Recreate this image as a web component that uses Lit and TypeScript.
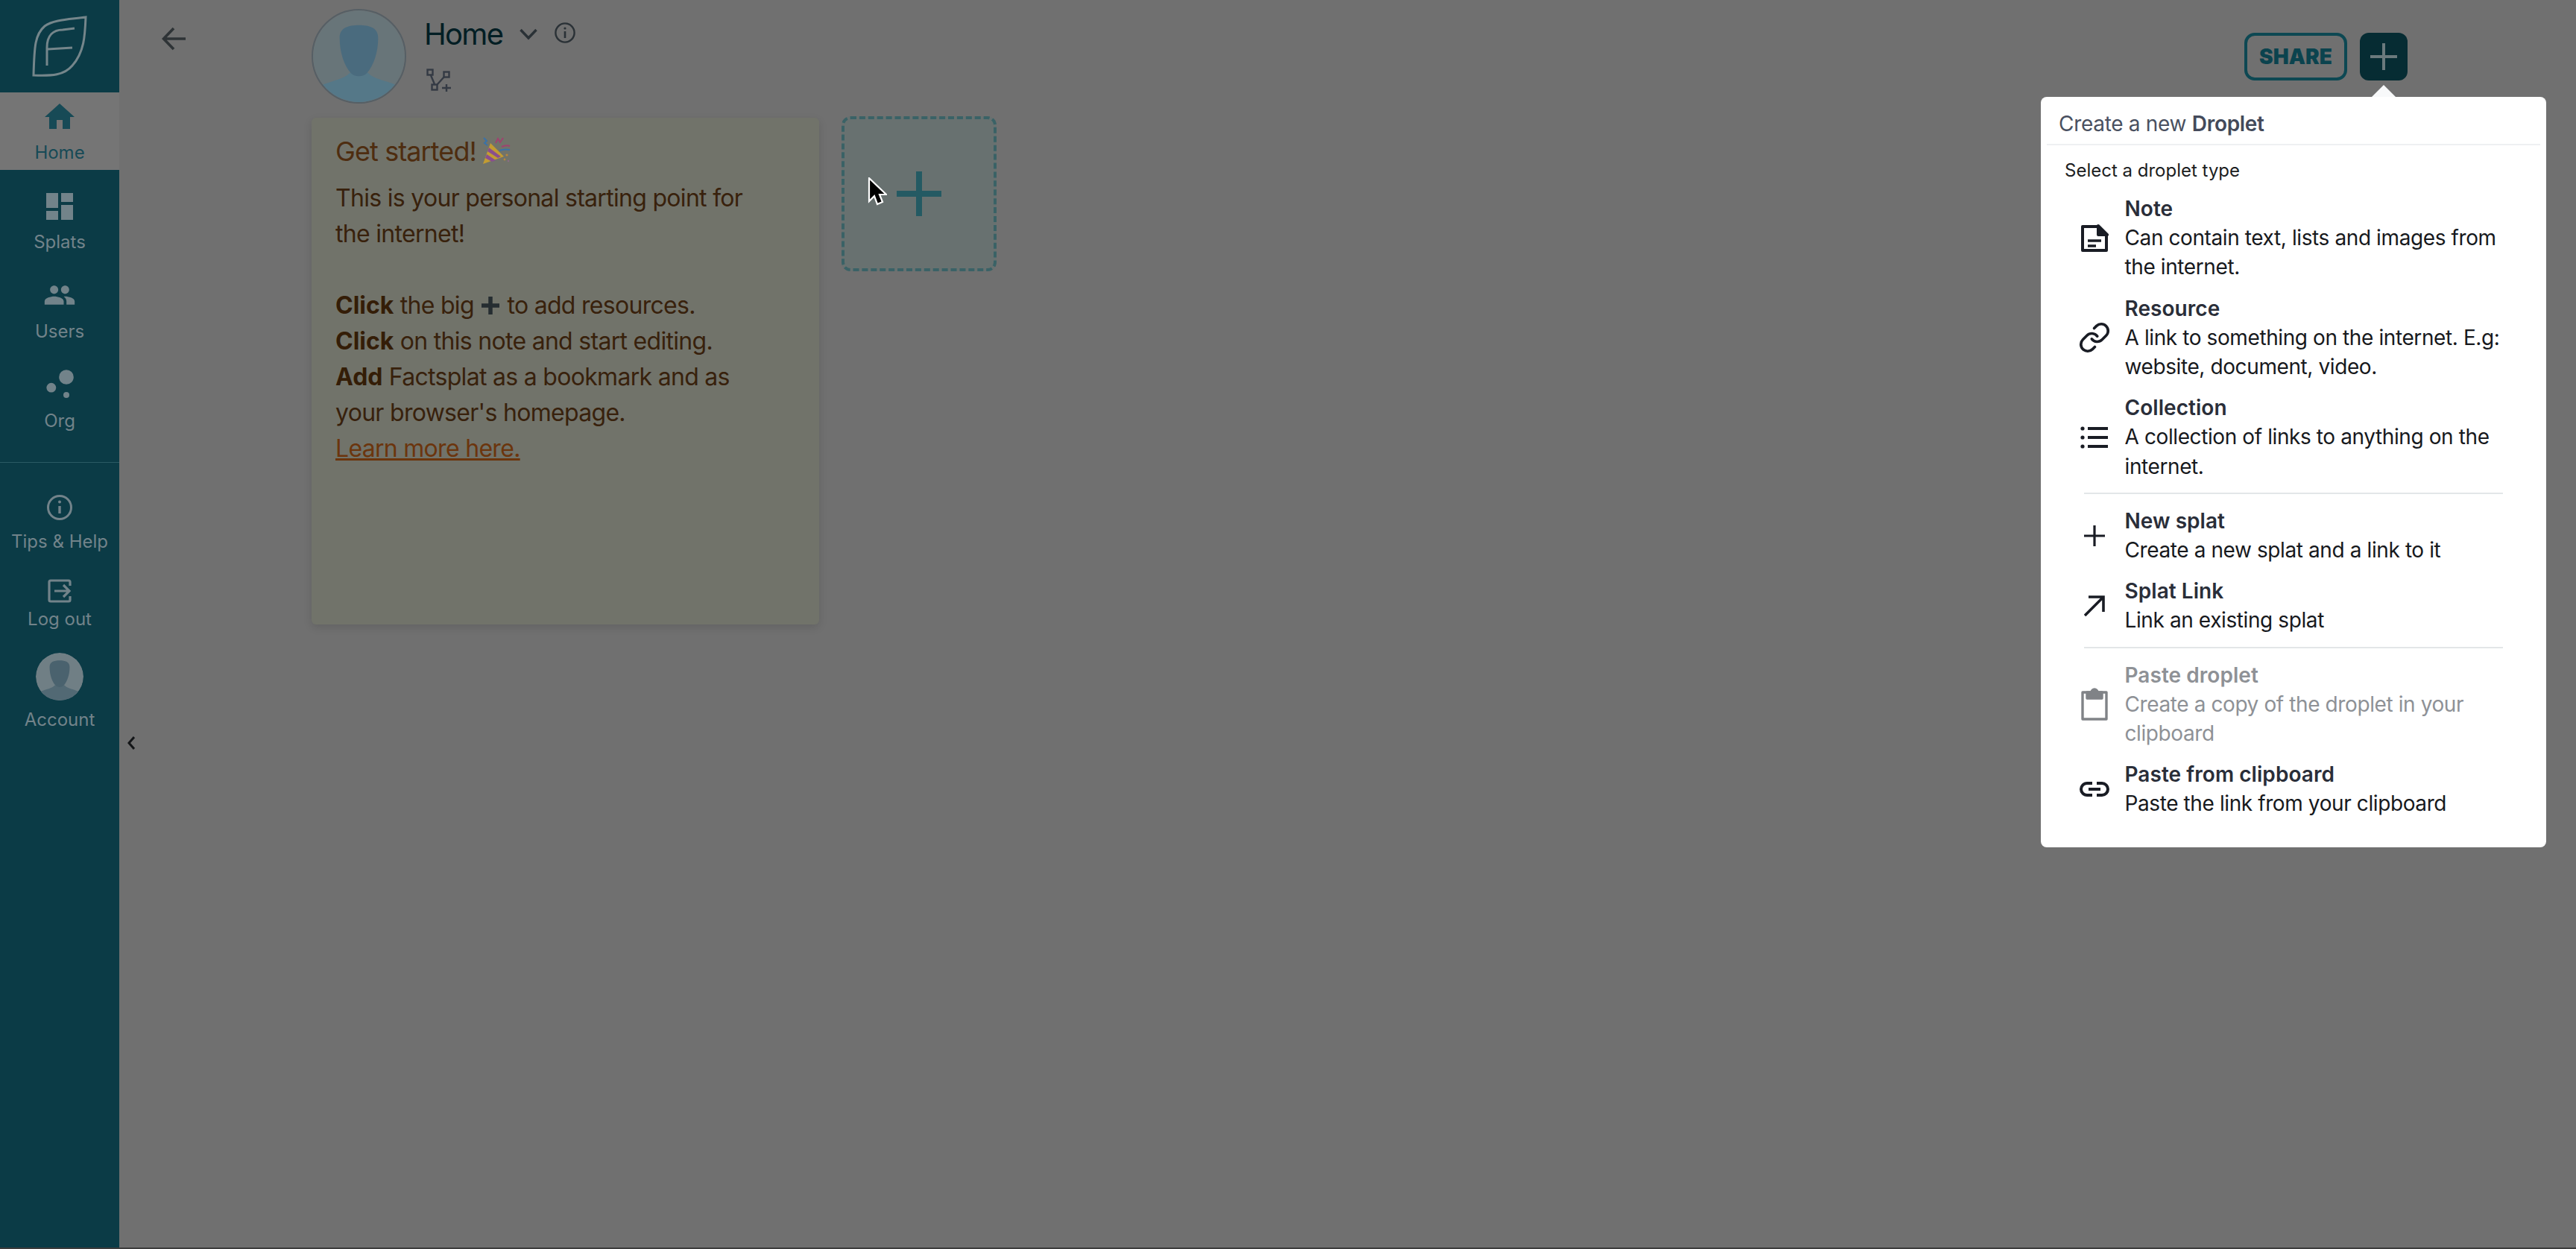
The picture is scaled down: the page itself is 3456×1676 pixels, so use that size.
import { LitElement, html, css, svg } from "lit";
import { customElement } from "lit/decorators.js";

const homeI = svg`<path d="M10 20v-6h4v6h5v-8h3L12 3 2 12h3v8z"/>`;
const dashI = svg`<path d="M3 13h8V3H3v10zm0 8h8v-6H3v6zm10 0h8V11h-8v10zm0-18v6h8V3h-8z"/>`;
const peopleI = svg`<path d="M16 11c1.66 0 2.99-1.34 2.99-3S17.66 5 16 5c-1.66 0-3 1.34-3 3s1.34 3 3 3zm-8 0c1.66 0 2.99-1.34 2.99-3S9.66 5 8 5C6.34 5 5 6.34 5 8s1.34 3 3 3zm0 2c-2.33 0-7 1.17-7 3.5V19h14v-2.5c0-2.33-4.67-3.5-7-3.5zm8 0c-.29 0-.62.02-.97.05 1.16.84 1.97 1.97 1.97 3.45V19h6v-2.5c0-2.33-4.67-3.5-7-3.5z"/>`;
const orgI = svg`<circle cx="16.5" cy="6.5" r="4.9"/><circle cx="6.4" cy="13.6" r="3.2"/><circle cx="16.5" cy="18.5" r="2"/>`;

const nav = [
  { label: "Home", icon: homeI, active: true, vb: "0 0 24 24", size: 48 },
  { label: "Splats", icon: dashI, vb: "0 0 24 24", size: 48 },
  { label: "Users", icon: peopleI, vb: "0 0 24 24", size: 44 },
  { label: "Org", icon: orgI, vb: "0 0 24 24", size: 48 },
];

const person = (skin: string, body: string, bg: string) => svg`
  <circle cx="50" cy="50" r="50" fill="${bg}"/>
  <path d="M8 82 C22 76 34 75 40 68 L60 68 C66 75 78 76 92 82 A50 50 0 0 1 8 82Z" fill="${body}"/>
  <path d="M29 30 C29 19 38 16 50 16 C62 16 71 19 71 30 C71 46 66 60 59 68 C55 73 45 73 41 68 C34 60 29 46 29 30Z" fill="${skin}"/>`;

type Item = { title: string; desc: string; icon: unknown; off?: boolean; div?: boolean };
const noteI = svg`<svg width="38" height="38" viewBox="0 0 38 38" fill="none" stroke="currentColor" stroke-width="4" stroke-linejoin="round"><path d="M3 3H24L35 14V35H3Z"/><path d="M24 2L36 14H24Z" fill="currentColor"/><path d="M10 22H28M10 29H21" stroke-width="3.4"/></svg>`;
const linkI = svg`<svg width="46" height="46" viewBox="0 0 24 24" fill="none" stroke="currentColor" stroke-width="2" stroke-linecap="round"><path d="M10 13a5 5 0 0 0 7.54.54l3-3a5 5 0 0 0-7.07-7.07l-1.72 1.71"/><path d="M14 11a5 5 0 0 0-7.54-.54l-3 3a5 5 0 0 0 7.07 7.07l1.71-1.71"/></svg>`;
const listI = svg`<svg width="38" height="30" viewBox="0 0 38 30" fill="currentColor"><circle cx="3" cy="3" r="2.6"/><circle cx="3" cy="15" r="2.6"/><circle cx="3" cy="27" r="2.6"/><rect x="10" y="1" width="27" height="4"/><rect x="10" y="13" width="27" height="4"/><rect x="10" y="25" width="27" height="4"/></svg>`;
const plusI = svg`<svg width="28" height="28" viewBox="0 0 28 28" fill="none" stroke="currentColor" stroke-width="3.2"><path d="M14 0V28M0 14H28"/></svg>`;
const arrowI = svg`<svg width="28" height="28" viewBox="0 0 28 28" fill="none" stroke="currentColor" stroke-width="3.6"><path d="M1 27L26 2M6 2H26V22"/></svg>`;
const clipI = svg`<svg width="36" height="44" viewBox="0 0 36 44" fill="none" stroke="currentColor" stroke-width="3.4" stroke-linejoin="round"><path d="M2 6H34V42H2Z"/><path d="M8 6H14A4 4 0 0 1 22 6H28V14H8Z" fill="currentColor"/></svg>`;
const chainI = svg`<svg width="40" height="20" viewBox="0 0 40 20" fill="none" stroke="currentColor" stroke-width="4"><path d="M17 2H10a8 8 0 0 0 0 16H17M23 2H30a8 8 0 0 1 0 16H23M12 10H28"/></svg>`;

const items: Item[] = [
  { title: "Note", desc: "Can contain text, lists and images from the internet.", icon: noteI },
  { title: "Resource", desc: "A link to something on the internet. E.g: website, document, video.", icon: linkI },
  { title: "Collection", desc: "A collection of links to anything on the internet.", icon: listI, div: true },
  { title: "New splat", desc: "Create a new splat and a link to it", icon: plusI },
  { title: "Splat Link", desc: "Link an existing splat", icon: arrowI, div: true },
  { title: "Paste droplet", desc: "Create a copy of the droplet in your clipboard", icon: clipI, off: true },
  { title: "Paste from clipboard", desc: "Paste the link from your clipboard", icon: chainI },
];

@customElement("app-root")
export class AppRoot extends LitElement {
  static styles = css`
    :host {
      display: flex;
      width: 100%;
      height: 1676px;
      box-sizing: border-box;
      border-bottom: 2px solid #3c3c3c;
      background: #707070;
      font-family: Inter, "Liberation Sans", sans-serif;
      overflow: hidden;
    }
    .side {
      width: 160px;
      flex: none;
      background: #0b3b46;
      color: #72838a;
      display: flex;
      flex-direction: column;
      font-size: 24px;
      line-height: 30px;
    }
    .logo { height: 124px; display: flex; align-items: center; justify-content: center; }
    .nav { display: flex; flex-direction: column; gap: 16px; }
    .item {
      height: 104px;
      display: flex;
      flex-direction: column;
      align-items: center;
    }
    .item.active { background: #757575; color: #174a56; }
    .icon { height: 66px; display: flex; align-items: center; justify-content: center; }
    .icon svg { display: block; fill: currentColor; }
    .users-fix { margin-top: -2px; }
    .rule { height: 1px; background: #2a5a64; margin-top: 32px; margin-bottom: 1px; }
    .low { display: flex; flex-direction: column; align-items: center; padding-top: 41px; }
    .low-item { display: flex; flex-direction: column; align-items: center; }
    .low-item svg { display: block; }
    .tips { height: 114px; }
    .tips span { margin-top: 13px; }
    .out { height: 99px; }
    .out span { margin-top: 7px; }
    .acct span { margin-top: 11px; }
    .acct svg { border-radius: 50%; }

    .main { flex: 1; position: relative; min-width: 0; }
    .header { display: flex; height: 156px; align-items: flex-start; }
    .back { width: 201px; padding: 36px 0 0 57px; flex: none; }
    .back svg { display: block; }
    .avatar { margin-top: 12px; flex: none; width: 127px; height: 127px; border-radius: 50%; box-sizing: border-box; border: 2px solid #565f65; overflow: hidden; }
    .avatar svg { display: block; width: 100%; height: 100%; }
    .tt { margin-left: 24px; padding-top: 22px; }
    .row1 { display: flex; align-items: center; height: 48px; }
    .row1 h1 { margin: 0; font-size: 40px; font-weight: 400; line-height: 48px; color: #021e24; letter-spacing: -1.7px; }
    .row1 .chev { margin-left: 23px; display: block; }
    .row1 .info { margin-left: 23px; margin-top: -4px; display: block; }
    .branch { display: block; margin: 22px 0 0 3px; }
    .actions { margin: 44px 226px 0 auto; display: flex; gap: 17px; }
    .share {
      width: 138px; height: 64px; box-sizing: border-box;
      border: 4px solid #0d4853; border-radius: 14px;
      color: #0b434e; font-size: 28px; font-weight: 900;
      display: flex; align-items: center; justify-content: center;
    }
    .add { width: 64px; height: 64px; border-radius: 12px; background: #062c33; display: flex; align-items: center; justify-content: center; }
    .add svg { display: block; }

    .board { padding-left: 258px; display: flex; gap: 30px; align-items: flex-start; }
    .card {
      width: 681px; height: 680px; margin-top: 2px; box-sizing: border-box;
      background: #71736a; border-radius: 6px;
      box-shadow: 0 4px 12px rgba(0,0,0,.12);
      padding: 22px 32px;
      color: #38210c; font-size: 32px; line-height: 48px; letter-spacing: -0.7px;
    }
    .card h2 { margin: 0 0 16px; font-size: 36px; line-height: 46px; font-weight: 400; color: #4e2d10; display: flex; align-items: center; gap: 8px; letter-spacing: -0.9px; }
    .card h2 svg { display: block; margin-top: -2px; }
    .card p { margin: 0; }
    .card b { font-weight: 700; color: #341d07; letter-spacing: 0; }
    .card a { color: #6b350d; text-decoration: underline; }
    .card .bigplus { display: inline-block; vertical-align: -1px; margin: 0 2px; }
    .tile {
      width: 208px; height: 208px; box-sizing: border-box;
      border: 4px dashed #3a6266; border-radius: 12px;
      background: #687170;
      display: flex; align-items: center; justify-content: center;
    }
    .tile svg { display: block; }
    .cursor { position: absolute; left: 1004px; top: 238px; display: block; }
    .collapse { position: absolute; left: 11px; top: 986px; display: block; }

    .pop {
      position: absolute; left: 2578px; top: 130px; width: 678px; height: 1007px;
      background: #fff; border-radius: 8px; color: #17191d;
      box-sizing: border-box;
    }
    .pop::before {
      content: ""; position: absolute; left: 444px; top: -16px;
      border-left: 16px solid transparent; border-right: 16px solid transparent;
      border-bottom: 16px solid #f8f9fa;
    }
    .pop-h {
      margin: 0 8px; height: 65px; box-sizing: border-box; padding: 20px 0 0 16px;
      border-bottom: 2px solid #eef0f2; font-size: 28px; line-height: 32px; color: #495060; letter-spacing: -0.3px;
    }
    .pop-h b { font-weight: 600; color: #434a5a; }
    .sel { font-size: 24px; line-height: 34px; margin: 17px 0 7px 32px; color: #1c1e22; }
    .mi { display: flex; align-items: center; padding: 8px 0; }
    .mi .ic { width: 44px; margin-left: 50px; flex: none; display: flex; justify-content: center; color: #191c24; }
    .mi .ic svg { display: block; }
    .mi .tx { margin-left: 18.5px; width: 540px; font-size: 28px; line-height: 39.2px; letter-spacing: -0.4px; }
    .mi .t { font-weight: 600; color: #2a2e39; letter-spacing: 0.05px; }
    .mi.off .t { color: #8e9196; }
    .mi.off .tx { color: #8e9196; }
    .mi.off .ic { color: #808387; }
    .div { height: 2px; background: #e3e6e8; margin: 7.5px 58px 8.5px; }
  `;

  render() {
    return html`
      <aside class="side">
        <div class="logo">
          <svg width="76" height="84" viewBox="0 0 76 84" fill="none" stroke="#75868b" stroke-width="3">
            <path d="M73 3C52 6 30 6 18 15C5 26 4 42 3 81C28 82 44 81 55 68C71 50 72 28 73 3Z"/>
            <path d="M21 68V44C21 27 30 20 42 20L58 18M22 46L55 44"/>
          </svg>
        </div>
        <div class="nav">
          ${nav.map(
            (n) => html`<div class="item ${n.active ? "active" : ""}">
              <div class="icon"><svg class="${n.label === "Users" ? "users-fix" : ""}" width="${n.size}" height="${n.size}" viewBox="${n.vb}">${n.icon}</svg></div>
              <span>${n.label}</span>
            </div>`
          )}
        </div>
        <div class="rule"></div>
        <div class="low">
          <div class="low-item tips">
            <svg width="36" height="36" viewBox="0 0 36 36" fill="none" stroke="currentColor" stroke-width="3"><circle cx="18" cy="18" r="15.5"/><path d="M18 16V26" stroke-width="3.4"/><circle cx="18" cy="10.5" r="2" fill="currentColor" stroke="none"/></svg>
            <span>Tips &amp; Help</span>
          </div>
          <div class="low-item out">
            <svg width="32" height="32" viewBox="0 0 32 32" fill="none" stroke="currentColor" stroke-width="3.2"><path d="M30 9V4a2 2 0 0 0-2-2H4A2 2 0 0 0 2 4V28a2 2 0 0 0 2 2H28a2 2 0 0 0 2-2V23"/><path d="M9 16H29M21 8L29 16L21 24"/></svg>
            <span>Log out</span>
          </div>
          <div class="low-item acct">
            <svg width="64" height="64" viewBox="0 0 100 100">${person("#4a626e", "#526974", "#707f85")}</svg>
            <span>Account</span>
          </div>
        </div>
      </aside>
      <main class="main">
        <div class="header">
          <div class="back">
            <svg width="32" height="32" viewBox="0 0 32 32" fill="none" stroke="#2e3336" stroke-width="3.6"><path d="M32 16H3M16 2L2.5 16L16 30"/></svg>
          </div>
          <div class="avatar"><svg viewBox="0 0 100 100">${person("#4a6b7e", "#557888", "#687579")}</svg></div>
          <div class="tt">
            <div class="row1">
              <h1>Home</h1>
              <svg class="chev" width="24" height="16" viewBox="0 0 24 16" fill="none" stroke="#2a3136" stroke-width="3.4"><path d="M1.5 2L12 13L22.5 2"/></svg>
              <svg class="info" width="28" height="28" viewBox="0 0 28 28" fill="none" stroke="#2a3136" stroke-width="2.4"><circle cx="14" cy="14" r="12.6"/><path d="M14 12V21" stroke-width="2.6"/><circle cx="14" cy="8" r="1.6" fill="#2a3136" stroke="none"/></svg>
            </div>
            <svg class="branch" width="34" height="32" viewBox="0 0 34 32" fill="none" stroke="#343a44" stroke-width="2.4">
              <rect x="1.5" y="1.5" width="7" height="7"/><rect x="23.5" y="4.5" width="7" height="7"/><rect x="7.5" y="21.5" width="7" height="7"/>
              <path d="M6 9L11 21M24 11L14 22M27 21V31M21 26H33"/>
            </svg>
          </div>
          <div class="actions">
            <div class="share">SHARE</div>
            <div class="add"><svg width="36" height="36" viewBox="0 0 36 36" fill="none" stroke="#6b7a7d" stroke-width="4"><path d="M18 0V36M0 18H36"/></svg></div>
          </div>
        </div>
        <div class="board">
          <div class="card">
            <h2>Get started!
              <svg width="38" height="38" viewBox="0 0 38 38">
                <path d="M1 37L11 9L29 27Z" fill="#c29c32"/>
                <path d="M6 24L18 32L13 34L4 29ZM9 15L25 27L21 29L7 20Z" fill="#8a4f8c"/>
                <path d="M2 2L6 6L3 9L7 12" fill="none" stroke="#3a72a8" stroke-width="2"/>
                <path d="M18 9L21 3L24 8L28 2M26 14C30 12 34 12 37 13" fill="none" stroke="#a0426f" stroke-width="2"/>
                <path d="M23 19C28 17 32 17 37 18" fill="none" stroke="#3a72a8" stroke-width="2"/>
                <circle cx="33" cy="25" r="1.6" fill="#b6863f"/><circle cx="30" cy="31" r="1.4" fill="#b6863f"/><circle cx="35" cy="33" r="1.2" fill="#8d6a8a"/>
              </svg>
            </h2>
            <p>This is your personal starting point for<br />the internet!</p>
            <p>&nbsp;</p>
            <p><b>Click</b> the big <svg class="bigplus" width="24" height="24" viewBox="0 0 24 24" fill="none" stroke="#252d31" stroke-width="5.5"><path d="M12 0V24M0 12H24"/></svg> to add resources.</p>
            <p><b>Click</b> on this note and start editing.</p>
            <p><b>Add</b> Factsplat as a bookmark and as<br />your browser's homepage.</p>
            <p><a>Learn more here.</a></p>
          </div>
          <div class="tile">
            <svg width="60" height="60" viewBox="0 0 60 60" fill="none" stroke="#245a63" stroke-width="8"><path d="M30 0V60M0 30H60"/></svg>
          </div>
        </div>
        <svg class="cursor" width="26" height="40" viewBox="0 0 26 40"><path d="M2 1V32L9 25L13 36L20 33L16 23H25Z" fill="#000" stroke="#fff" stroke-width="2.2"/></svg>
        <svg class="collapse" width="10" height="22" viewBox="0 0 10 22" fill="none" stroke="#141618" stroke-width="3"><path d="M9 3L2 11L9 19"/></svg>
        <section class="pop">
          <div class="pop-h">Create a new <b>Droplet</b></div>
          <div class="sel">Select a droplet type</div>
          ${items.map(
            (it) => html`<div class="mi ${it.off ? "off" : ""}">
                <div class="ic">${it.icon}</div>
                <div class="tx"><div class="t">${it.title}</div><div>${it.desc}</div></div>
              </div>
              ${it.div ? html`<div class="div"></div>` : ""}`
          )}
        </section>
      </main>
    `;
  }
}
